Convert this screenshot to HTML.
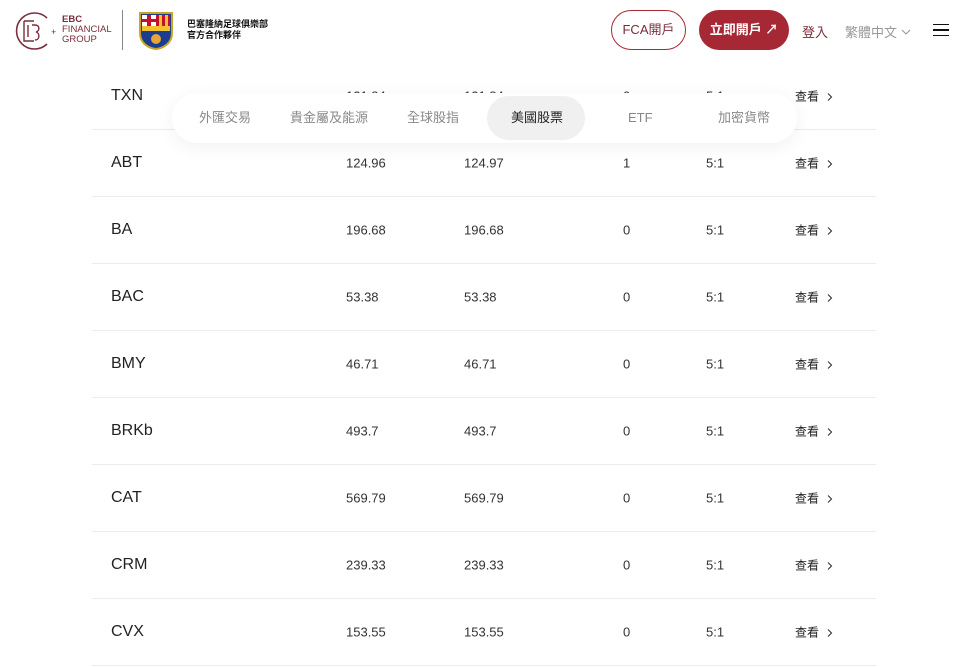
<!DOCTYPE html>
<html><head><meta charset="utf-8"><style>
*{margin:0;padding:0;box-sizing:border-box}
body{width:978px;height:667px;overflow:hidden;background:#fff;font-family:"Liberation Sans","Noto Sans CJK TC",sans-serif;color:#222;position:relative}
.hdr{position:absolute;top:0;left:0;width:978px;height:62px;background:#fff;z-index:5}
.row{position:absolute;left:92px;width:784px;height:67px;border-bottom:1px solid #ececec}
.row span{position:absolute;top:50%;transform:translateY(-50%);font-size:13px;color:#333}
.row .s{left:19px;font-size:16px;color:#222}
.row .a{left:254px}.row .b{left:372px}.row .c{left:531px}.row .d{left:614px}
.row .e{left:703px;font-size:12px;color:#222}
.row .e svg{margin-left:8px;vertical-align:-1px}
.tabs{position:absolute;left:172px;top:93px;width:625px;height:50px;background:#fff;border-radius:25px;box-shadow:0 4px 18px rgba(0,0,0,.06);z-index:4}
.tabs span{position:absolute;top:0;line-height:50px;font-size:13px;color:#888}
.pill{position:absolute;left:315px;top:3px;width:98px;height:44px;border-radius:22px;background:#f0f0f0}
</style></head><body>
<div class="hdr">
  <svg style="position:absolute;left:14px;top:11px" width="46" height="40" viewBox="0 0 46 40"><path d="M33 7A18 18 0 1 0 33 33" fill="none" stroke="#7a2d3a" stroke-width="1.6"/><path d="M10 10h10M10 10v20h10M14 14v12M18 14h3c5 0 5 6 1 7c4 1 4 8-1 8" fill="none" stroke="#7a2d3a" stroke-width="1.4"/><text x="37" y="24" font-size="9" fill="#7a2d3a">+</text></svg>
  <div style="position:absolute;left:62px;top:15px;font-size:9.5px;line-height:10px;color:#7a2d3a"><b>EBC</b><br>FINANCIAL<br>GROUP</div>
  <div style="position:absolute;left:122px;top:10px;width:1px;height:40px;background:#888"></div>
  <svg style="position:absolute;left:137px;top:10px" width="38" height="40" viewBox="0 0 38 40"><path d="M3 3h32v20c0 10-8 15-16 16C11 38 3 33 3 23z" fill="#1a3d8f" stroke="#c9a227" stroke-width="2"/><rect x="5" y="5" width="14" height="11" fill="#fff"/><rect x="10" y="5" width="4" height="11" fill="#c8102e"/><rect x="5" y="9" width="14" height="3" fill="#c8102e"/><rect x="19" y="5" width="14" height="11" fill="#c8102e"/><rect x="22" y="5" width="3" height="11" fill="#f2c230"/><rect x="28" y="5" width="3" height="11" fill="#f2c230"/><rect x="5" y="16" width="28" height="5" fill="#f2c230"/><circle cx="19" cy="29" r="5" fill="#e8a33a"/></svg>
  <div style="position:absolute;left:187px;top:19px;font-size:9px;line-height:11px;font-weight:bold;color:#111">巴塞隆納足球俱樂部<br>官方合作夥伴</div>
  <div style="position:absolute;left:611px;top:10px;width:75px;height:40px;border:1px solid #a52834;border-radius:20px;text-align:center;line-height:38px;font-size:13px;color:#7a2d3a">FCA開戶</div>
  <div style="position:absolute;left:699px;top:10px;width:90px;height:40px;background:#a52834;border-radius:20px;text-align:center;line-height:40px;font-size:13px;color:#fff;font-weight:bold">立即開戶 ↗</div>
  <div style="position:absolute;left:802px;top:22px;font-size:13px;color:#7a2d3a">登入</div>
  <div style="position:absolute;left:845px;top:22px;font-size:13px;color:#999">繁體中文 <svg width="10" height="6" viewBox="0 0 10 6" style="vertical-align:2px"><path d="M1 1l4 4 4-4" fill="none" stroke="#999" stroke-width="1.1"/></svg></div>
  <div style="position:absolute;left:933px;top:24px;width:16px;height:12px;border-top:1.5px solid #111;border-bottom:1.5px solid #111"><div style="margin-top:4px;height:1.5px;background:#111"></div></div>
</div>
<div class="row" style="top:63px"><span class="s">TXN</span><span class="a">121.84</span><span class="b">121.84</span><span class="c">0</span><span class="d">5:1</span><span class="e">查看<svg width="6" height="9" viewBox="0 0 6 9"><path d="M1 1l3.5 3.5L1 8" fill="none" stroke="#333" stroke-width="1.1"/></svg></span></div>
<div class="row" style="top:130px"><span class="s">ABT</span><span class="a">124.96</span><span class="b">124.97</span><span class="c">1</span><span class="d">5:1</span><span class="e">查看<svg width="6" height="9" viewBox="0 0 6 9"><path d="M1 1l3.5 3.5L1 8" fill="none" stroke="#333" stroke-width="1.1"/></svg></span></div>
<div class="row" style="top:197px"><span class="s">BA</span><span class="a">196.68</span><span class="b">196.68</span><span class="c">0</span><span class="d">5:1</span><span class="e">查看<svg width="6" height="9" viewBox="0 0 6 9"><path d="M1 1l3.5 3.5L1 8" fill="none" stroke="#333" stroke-width="1.1"/></svg></span></div>
<div class="row" style="top:264px"><span class="s">BAC</span><span class="a">53.38</span><span class="b">53.38</span><span class="c">0</span><span class="d">5:1</span><span class="e">查看<svg width="6" height="9" viewBox="0 0 6 9"><path d="M1 1l3.5 3.5L1 8" fill="none" stroke="#333" stroke-width="1.1"/></svg></span></div>
<div class="row" style="top:331px"><span class="s">BMY</span><span class="a">46.71</span><span class="b">46.71</span><span class="c">0</span><span class="d">5:1</span><span class="e">查看<svg width="6" height="9" viewBox="0 0 6 9"><path d="M1 1l3.5 3.5L1 8" fill="none" stroke="#333" stroke-width="1.1"/></svg></span></div>
<div class="row" style="top:398px"><span class="s">BRKb</span><span class="a">493.7</span><span class="b">493.7</span><span class="c">0</span><span class="d">5:1</span><span class="e">查看<svg width="6" height="9" viewBox="0 0 6 9"><path d="M1 1l3.5 3.5L1 8" fill="none" stroke="#333" stroke-width="1.1"/></svg></span></div>
<div class="row" style="top:465px"><span class="s">CAT</span><span class="a">569.79</span><span class="b">569.79</span><span class="c">0</span><span class="d">5:1</span><span class="e">查看<svg width="6" height="9" viewBox="0 0 6 9"><path d="M1 1l3.5 3.5L1 8" fill="none" stroke="#333" stroke-width="1.1"/></svg></span></div>
<div class="row" style="top:532px"><span class="s">CRM</span><span class="a">239.33</span><span class="b">239.33</span><span class="c">0</span><span class="d">5:1</span><span class="e">查看<svg width="6" height="9" viewBox="0 0 6 9"><path d="M1 1l3.5 3.5L1 8" fill="none" stroke="#333" stroke-width="1.1"/></svg></span></div>
<div class="row" style="top:599px"><span class="s">CVX</span><span class="a">153.55</span><span class="b">153.55</span><span class="c">0</span><span class="d">5:1</span><span class="e">查看<svg width="6" height="9" viewBox="0 0 6 9"><path d="M1 1l3.5 3.5L1 8" fill="none" stroke="#333" stroke-width="1.1"/></svg></span></div>
<div class="tabs"><div class="pill"></div>
<span style="left:27px">外匯交易</span><span style="left:118px">貴金屬及能源</span><span style="left:235px">全球股指</span><span style="left:339px;color:#222">美國股票</span><span style="left:456px">ETF</span><span style="left:546px">加密貨幣</span></div>
</body></html>
